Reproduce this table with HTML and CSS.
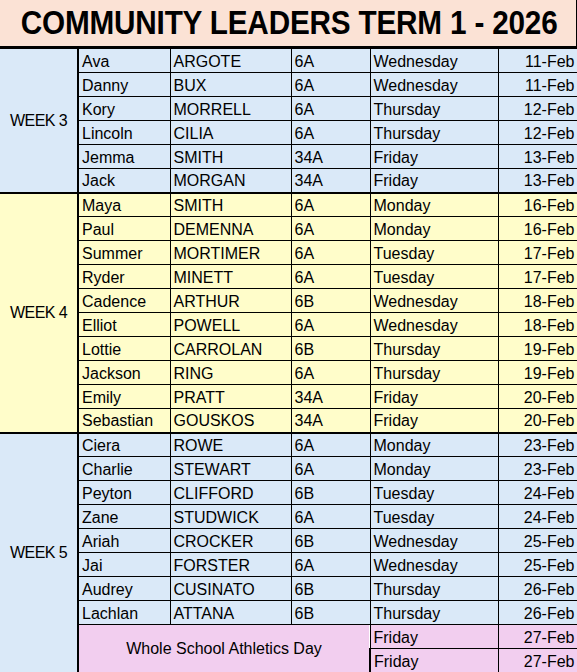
FILE: index.html
```html
<!DOCTYPE html>
<html lang="en">
<head>
<meta charset="utf-8">
<title>Community Leaders Term 1 - 2026</title>
<link rel="stylesheet" href="styles.css">
</head>
<body>
<div class="sheet">
  <div class="title"><span class="title-text">COMMUNITY LEADERS TERM 1 - 2026</span></div>
  <table class="roster">
    <colgroup>
      <col class="c-week"><col class="c-first"><col class="c-last"><col class="c-class"><col class="c-day"><col class="c-date">
    </colgroup>
    <tbody class="blue">
      <tr><td class="week" rowspan="6">WEEK 3</td><td>Ava</td><td>ARGOTE</td><td>6A</td><td>Wednesday</td><td class="date">11-Feb</td></tr>
      <tr><td>Danny</td><td>BUX</td><td>6A</td><td>Wednesday</td><td class="date">11-Feb</td></tr>
      <tr><td>Kory</td><td>MORRELL</td><td>6A</td><td>Thursday</td><td class="date">12-Feb</td></tr>
      <tr><td>Lincoln</td><td>CILIA</td><td>6A</td><td>Thursday</td><td class="date">12-Feb</td></tr>
      <tr><td>Jemma</td><td>SMITH</td><td>34A</td><td>Friday</td><td class="date">13-Feb</td></tr>
      <tr class="end"><td>Jack</td><td>MORGAN</td><td>34A</td><td>Friday</td><td class="date">13-Feb</td></tr>
    </tbody>
    <tbody class="yellow">
      <tr><td class="week" rowspan="10">WEEK 4</td><td>Maya</td><td>SMITH</td><td>6A</td><td>Monday</td><td class="date">16-Feb</td></tr>
      <tr><td>Paul</td><td>DEMENNA</td><td>6A</td><td>Monday</td><td class="date">16-Feb</td></tr>
      <tr><td>Summer</td><td>MORTIMER</td><td>6A</td><td>Tuesday</td><td class="date">17-Feb</td></tr>
      <tr><td>Ryder</td><td>MINETT</td><td>6A</td><td>Tuesday</td><td class="date">17-Feb</td></tr>
      <tr><td>Cadence</td><td>ARTHUR</td><td>6B</td><td>Wednesday</td><td class="date">18-Feb</td></tr>
      <tr><td>Elliot</td><td>POWELL</td><td>6A</td><td>Wednesday</td><td class="date">18-Feb</td></tr>
      <tr><td>Lottie</td><td>CARROLAN</td><td>6B</td><td>Thursday</td><td class="date">19-Feb</td></tr>
      <tr><td>Jackson</td><td>RING</td><td>6A</td><td>Thursday</td><td class="date">19-Feb</td></tr>
      <tr><td>Emily</td><td>PRATT</td><td>34A</td><td>Friday</td><td class="date">20-Feb</td></tr>
      <tr class="end"><td>Sebastian</td><td>GOUSKOS</td><td>34A</td><td>Friday</td><td class="date">20-Feb</td></tr>
    </tbody>
    <tbody class="blue">
      <tr><td class="week" rowspan="10">WEEK 5</td><td>Ciera</td><td>ROWE</td><td>6A</td><td>Monday</td><td class="date">23-Feb</td></tr>
      <tr><td>Charlie</td><td>STEWART</td><td>6A</td><td>Monday</td><td class="date">23-Feb</td></tr>
      <tr><td>Peyton</td><td>CLIFFORD</td><td>6B</td><td>Tuesday</td><td class="date">24-Feb</td></tr>
      <tr><td>Zane</td><td>STUDWICK</td><td>6A</td><td>Tuesday</td><td class="date">24-Feb</td></tr>
      <tr><td>Ariah</td><td>CROCKER</td><td>6B</td><td>Wednesday</td><td class="date">25-Feb</td></tr>
      <tr><td>Jai</td><td>FORSTER</td><td>6A</td><td>Wednesday</td><td class="date">25-Feb</td></tr>
      <tr><td>Audrey</td><td>CUSINATO</td><td>6B</td><td>Thursday</td><td class="date">26-Feb</td></tr>
      <tr><td>Lachlan</td><td>ATTANA</td><td>6B</td><td>Thursday</td><td class="date">26-Feb</td></tr>
      <tr class="event"><td class="event-name" colspan="3" rowspan="2">Whole School Athletics Day</td><td>Friday</td><td class="date">27-Feb</td></tr>
      <tr class="event"><td>Friday</td><td class="date">27-Feb</td></tr>
    </tbody>
  </table>
</div>
</body>
</html>
```

FILE: styles.css
```css
html, body {
  margin: 0;
  padding: 0;
  background: #ffffff;
}

.sheet {
  width: 577px;
  font-family: "Liberation Sans", Arial, sans-serif;
  color: #000;
}

.title {
  box-sizing: border-box;
  height: 48px;
  display: flex;
  justify-content: center;
  align-items: center;
  background: #fbe2d5;
  border-bottom: 2px solid #000;
  border-right: 1px solid #000;
  font-weight: bold;
  font-size: 33px;
  line-height: 46px;
  overflow: hidden;
}

.title-text {
  flex-shrink: 0;
  white-space: nowrap;
  transform: scaleX(0.9);
  letter-spacing: -0.2px;
  padding-left: 2px;
}

.roster {
  width: 577px;
  border-collapse: collapse;
  table-layout: fixed;
  font-size: 16px;
}

.c-week { width: 78px; }
.c-first { width: 92px; }
.c-last { width: 121px; }
.c-class { width: 79px; }
.c-day { width: 128px; }
.c-date { width: 79px; }

.roster tr {
  height: 24px;
}

.roster td {
  padding: 1px 3px 0;
  border: 1px solid #000;
  line-height: 21px;
  white-space: nowrap;
  overflow: hidden;
}

.roster tr td:first-child:not(.week):not(.event-name) {
  border-left: 2px solid #000;
}

.roster td.week {
  border-left: none;
  border-right: 2px solid #000;
  border-bottom: 2px solid #000;
  text-align: center;
  vertical-align: middle;
  padding: 0 2px;
  letter-spacing: -0.6px;
}

.roster td.date {
  text-align: right;
  padding-right: 2px;
}

.roster tr.end td {
  border-bottom: 2px solid #000;
}

.blue td { background: #dae9f8; }
.yellow td { background: #fffdca; }

.roster tr.event td { background: #f2ceef; }

.roster td.event-name {
  border-left: 2px solid #000;
  text-align: center;
  vertical-align: middle;
  padding-top: 0;
}

.roster tbody:last-child tr:last-child td {
  border-bottom: none;
}
```
